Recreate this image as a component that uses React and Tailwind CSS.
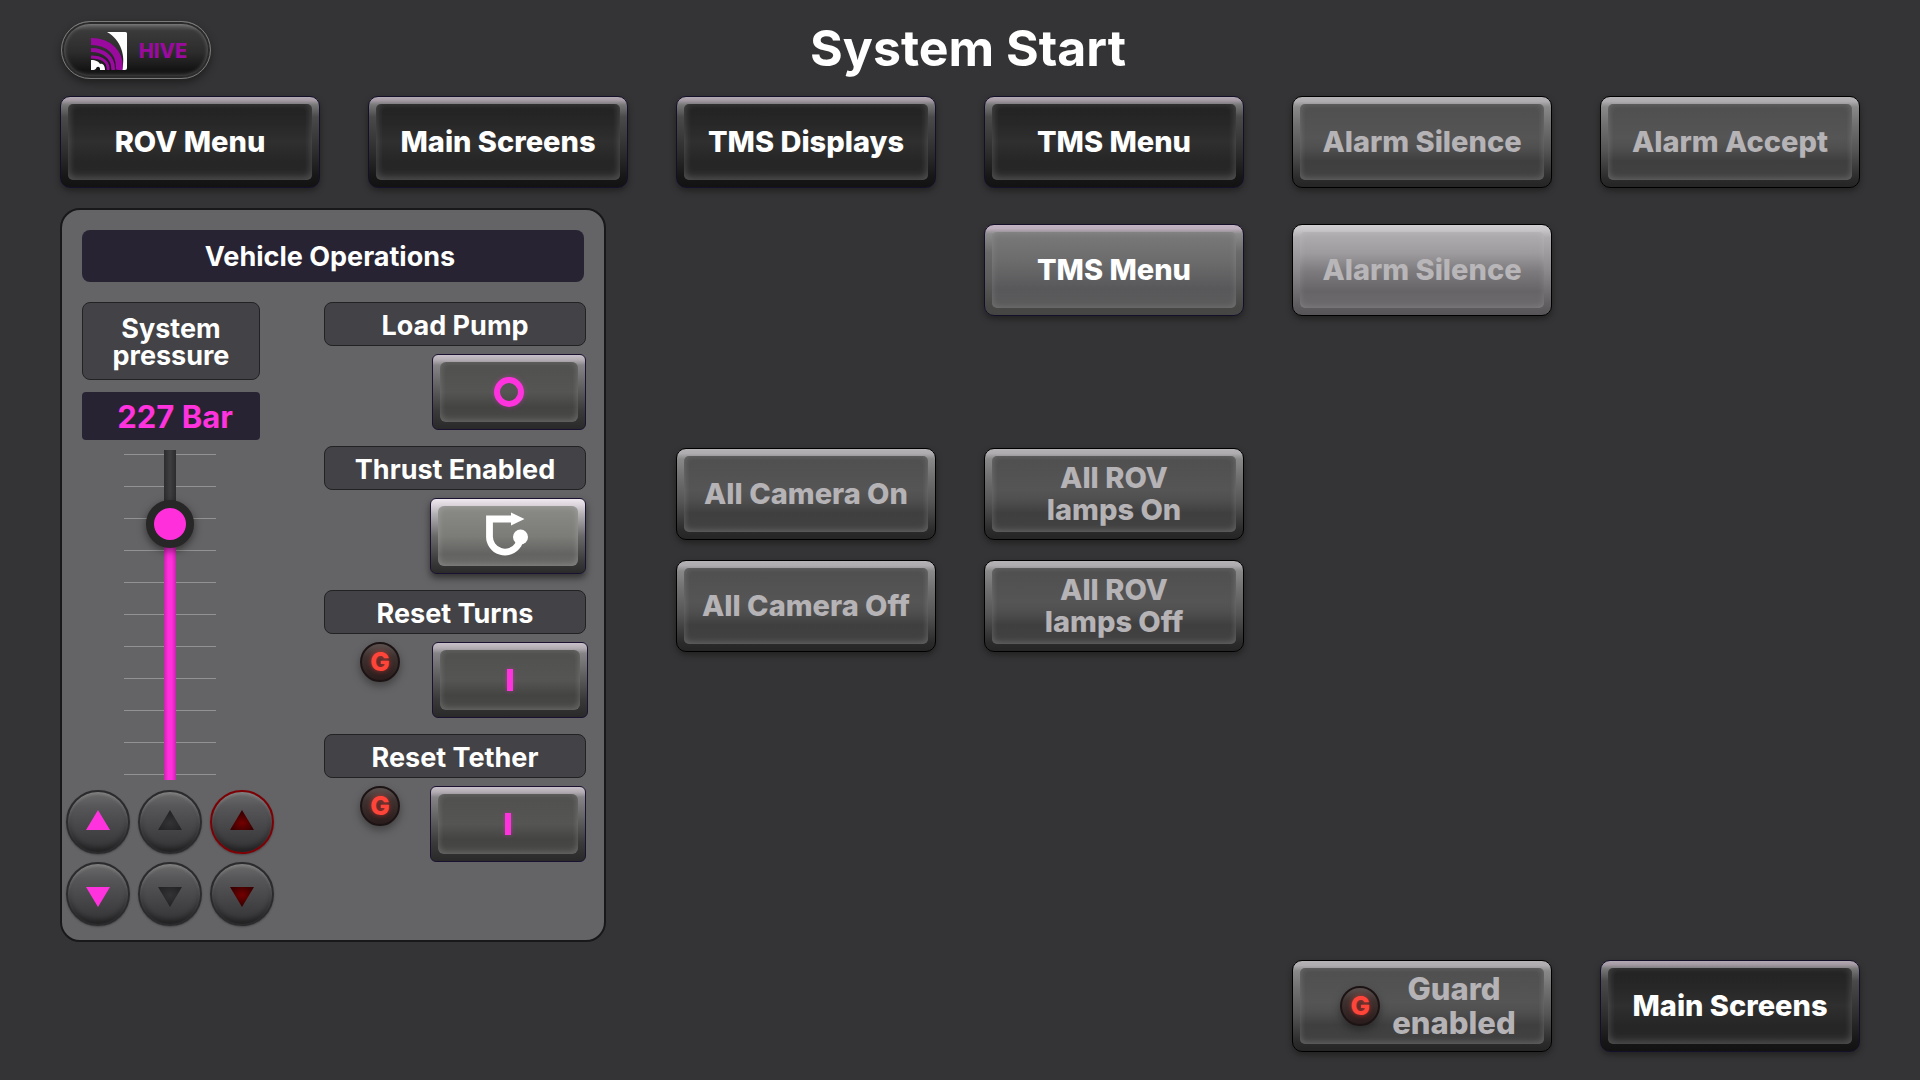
import { useState } from "react";

const FACES = {
  dark: {
    shell:
      "border-[#15102a] bg-[linear-gradient(180deg,#b3a9b3_0%,#a39aa3_4%,#767676_9%,#4a4a4a_22%,#2e2e2e_60%,#171717_88%,#121212_100%)]",
    face: "bg-[linear-gradient(180deg,#222222_0%,#272727_25%,#2f2f2f_50%,#262626_75%,#272727_100%)] shadow-[inset_0_-3px_8px_rgba(255,255,255,0.16),inset_0_0_8px_rgba(255,255,255,0.08)] text-white",
  },
  lit: {
    shell:
      "border-[#15102a] bg-[linear-gradient(180deg,#c4b4c4_0%,#bcaebc_4%,#8a8a8a_10%,#6a6a6a_30%,#5c5c5c_60%,#474745_90%,#454543_100%)]",
    face: "bg-[linear-gradient(180deg,#7a7a7b_0%,#6b6b6c_40%,#58585a_75%,#5c5c5d_100%)] shadow-[inset_0_0_7px_rgba(255,255,255,0.16)] text-white",
  },
  muted: {
    shell:
      "border-black bg-[linear-gradient(180deg,#b5b3b5_0%,#aeacae_5%,#8a898a_11%,#727172_30%,#555455_60%,#2c2b2c_90%,#262526_100%)]",
    face: "bg-[linear-gradient(180deg,#504f50_0%,#565556_45%,#504f50_58%,#403f40_75%,#434243_100%)] shadow-[inset_0_-2px_7px_rgba(255,255,255,0.12),inset_0_0_7px_rgba(255,255,255,0.1)] text-[#b5b3b5]",
  },
  mutedLit: {
    shell:
      "border-black bg-[linear-gradient(180deg,#d0ced0_0%,#c6c4c6_6%,#adabad_14%,#8c8a8c_50%,#5e5c5e_90%,#565456_100%)]",
    face: "bg-[linear-gradient(180deg,#b0aeb0_0%,#9d9b9d_28%,#7c7a7c_52%,#666466_78%,#6d6b6d_100%)] shadow-[inset_0_0_7px_rgba(255,255,255,0.14)] text-[#b8b6b8]",
  },
};

function BevelButton({ tone, className = "", children }) {
  const t = FACES[tone];
  return (
    <button
      type="button"
      className={`flex h-[92px] w-full rounded-[10px] border p-[7px] shadow-[0_3px_6px_rgba(0,0,0,0.35)] ${t.shell} ${className}`}
    >
      <span
        className={`flex flex-1 items-center justify-center self-stretch rounded-[5px] text-center text-[29px] leading-8 font-extrabold ${t.face}`}
      >
        {children}
      </span>
    </button>
  );
}

function GuardBadge() {
  return (
    <span className="flex h-10 w-10 shrink-0 items-center justify-center rounded-full border-2 border-[#1c1414] bg-[linear-gradient(180deg,#5c504e_0%,#3e3230_35%,#2a1c1c_100%)] text-[26px] leading-none font-extrabold text-[#ff453a] shadow-[0_4px_8px_rgba(0,0,0,0.35)] [text-shadow:0_0_5px_rgba(255,50,40,0.6)]">
      G
    </span>
  );
}

function Label({ children, className = "" }) {
  return (
    <div
      className={`flex items-center justify-center rounded-lg border border-[#222124] bg-[#434246] pt-0.5 text-center text-[27px] leading-[27px] font-bold text-white ${className}`}
    >
      {children}
    </div>
  );
}

function SwitchButton({ label, lit, wide, children }) {
  return (
    <button
      type="button"
      aria-label={label}
      className={`flex h-[76px] rounded-md border border-[#1b1232] p-[7px] ${wide ? "w-[156px]" : "w-[154px]"} ${
        lit
          ? "bg-[linear-gradient(180deg,#efe8ef_0%,#dcd6dc_8%,#b4b1b4_20%,#6a696a_50%,#3a393a_85%,#2a2a2a_100%)] shadow-[0_4px_7px_rgba(0,0,0,0.5)]"
          : "bg-[linear-gradient(180deg,#c9c0c9_0%,#b2acb2_7%,#858385_14%,#656465_40%,#3a3a3a_75%,#292929_100%)]"
      }`}
    >
      <span
        className={`flex flex-1 items-center justify-center self-stretch rounded-md ${
          lit
            ? "bg-[linear-gradient(180deg,#8b8b88_0%,#7c7c79_50%,#636361_80%,#6c6c6a_100%)] shadow-[inset_0_0_7px_rgba(255,255,255,0.22)]"
            : "bg-[linear-gradient(180deg,#50504e_0%,#555553_50%,#444443_75%,#494947_100%)] shadow-[inset_0_-2px_7px_rgba(255,255,255,0.12),inset_0_0_7px_rgba(255,255,255,0.1)]"
        }`}
      >
        {children}
      </span>
    </button>
  );
}

function Ring() {
  return (
    <span className="h-[30px] w-[30px] rounded-full border-[6px] border-[#ff33dd] shadow-[0_0_5px_rgba(255,51,221,0.35)]" />
  );
}

function Bar() {
  return <span className="h-[22px] w-[6px] bg-[#ff33dd] shadow-[0_0_5px_rgba(255,51,221,0.35)]" />;
}

function ThrustIcon() {
  return (
    <svg viewBox="1 0 44 44" className="h-11 w-11 overflow-visible" aria-hidden="true">
      <path d="M28 5H4.500V22A15.500 15.500 0 0 0 33 31L36 25" fill="none" stroke="#fff" strokeWidth="6.800" />
      <path d="M26 -1.500L39.500 5L26 11.500Z" fill="#fff" />
      <circle cx="35.500" cy="23" r="7.500" fill="#fff" />
    </svg>
  );
}

function Control({ label, guarded, lit, wide, flush, children }) {
  return (
    <div className="flex flex-col gap-2">
      <Label className="h-11">{label}</Label>
      <div className={`flex items-start justify-between pl-9 ${flush ? "-mr-0.5" : ""}`}>
        <span>{guarded && <GuardBadge />}</span>
        <SwitchButton label={label} lit={lit} wide={wide}>
          {children}
        </SwitchButton>
      </div>
    </div>
  );
}

const MAX_BAR = 293;

function PressureSlider({ value, onChange }) {
  const percent = (value / MAX_BAR) * 100;
  return (
    <div className="relative ml-[42px] h-[330px] w-[92px]">
      <div className="flex h-full flex-col justify-between pt-1 pb-[5px]">
        {Array.from({ length: 11 }, (_, i) => (
          <span key={i} className="h-px w-full bg-[#929292]" />
        ))}
      </div>
      <div className="absolute inset-y-0 left-10 w-3 bg-[linear-gradient(90deg,#2c2c2e,#3e3e40_50%,#2c2c2e)]" />
      <div
        className="absolute bottom-0 left-10 w-3 bg-[linear-gradient(90deg,#c925ae,#ff2fdb_35%,#ff2fdb_65%,#c925ae)]"
        style={{ height: `${percent}%` }}
      />
      <div
        className="absolute left-[22px] h-12 w-12 translate-y-1/2 rounded-full border-8 border-[#272728] bg-[#ff2fdb] shadow-[0_3px_8px_rgba(0,0,0,0.5)]"
        style={{ bottom: `${percent}%` }}
      />
      <input
        type="range"
        aria-label="System pressure"
        min="0"
        max={MAX_BAR}
        value={value}
        onChange={(e) => onChange(Number(e.target.value))}
        className="absolute inset-0 h-full w-full cursor-pointer opacity-0 [direction:rtl] [writing-mode:vertical-lr]"
      />
    </div>
  );
}

function StepButton({ label, down, color, inner, ring, onClick }) {
  const id = `step-${label.toLowerCase().replace(/\s+/g, "-")}`;
  return (
    <button
      type="button"
      aria-label={label}
      onClick={onClick}
      className={`flex h-16 w-16 items-center justify-center rounded-full border-2 bg-[linear-gradient(180deg,#6c6b6c_0%,#565557_25%,#464547_60%,#3a393b_85%,#2e2d2f_100%)] shadow-[inset_0_2px_3px_rgba(255,255,255,0.18),inset_0_-4px_5px_rgba(0,0,0,0.3),0_1px_2px_rgba(0,0,0,0.3)] ${ring}`}
    >
      <svg viewBox="0 0 24 20" className={`mb-1 h-5 w-6 ${down ? "mt-2.5" : ""}`} aria-hidden="true">
        <radialGradient id={id} cx="0.5" cy={down ? "0.4" : "0.65"} r="0.5">
          <stop offset="0" stopColor={inner} />
          <stop offset="1" stopColor={color} />
        </radialGradient>
        <path d={down ? "M12 20L24 0H0Z" : "M12 0L24 20H0Z"} fill={`url(#${id})`} />
      </svg>
    </button>
  );
}

function HiveLogo() {
  return (
    <svg viewBox="0 0 36 38" className="h-[38px] w-9" aria-hidden="true">
      <path d="M16 0H34.500A1.500 1.500 0 0 1 36 1.500V36A2 2 0 0 1 34 38H31C35 24 30 8 16 0Z" fill="#fff" />
      <g fill="none" stroke="#9b0a9e">
        <path d="M0 9.500C18 9.500 30 21 28 38" strokeWidth="7" />
        <path d="M0 18C13 18 23 26 22 38" strokeWidth="3.800" />
        <path d="M0 25C10 25 18 29 17 38" strokeWidth="3" />
      </g>
      <path d="M0 28C5 28 8 30 9 32C12 31 14 34 14 38H9C9.500 35 7 34 5.500 35.500C5 37 4 38 2.500 38H0Z" fill="#fff" />
    </svg>
  );
}

export default function App() {
  const [pressure, setPressure] = useState(227);
  const step = (d) => setPressure((p) => Math.min(MAX_BAR, Math.max(0, p + d)));

  return (
    <div className="flex min-h-screen flex-col bg-[#343335] px-[60px] pb-7 font-[Inter,'Liberation_Sans',sans-serif]">
      <header className="grid h-24 grid-cols-[1fr_auto_1fr] items-center">
        <button
          type="button"
          className="mt-1 ml-px flex h-[58px] w-[150px] items-center justify-center gap-3 rounded-full border border-[#7b7b7b] bg-[linear-gradient(180deg,#6e6e6e_0%,#3a3a3a_16%,#2c2c2c_55%,#141414_85%,#1c1c1c_100%)] pt-0.5 pl-1.5 text-xl font-extrabold text-[#9b0a9e] shadow-[inset_0_0_0_2px_#2b2b2b,inset_0_0_4px_2px_rgba(255,255,255,0.3),0_4px_8px_rgba(0,0,0,0.4)]"
        >
          <HiveLogo />
          HIVE
        </button>
        <h1 className="pl-4 text-[50px] leading-none font-bold text-white">System Start</h1>
      </header>

      <nav className="grid grid-cols-6 gap-x-12">
        <BevelButton tone="dark">ROV Menu</BevelButton>
        <BevelButton tone="dark">Main Screens</BevelButton>
        <BevelButton tone="dark">TMS Displays</BevelButton>
        <BevelButton tone="dark">TMS Menu</BevelButton>
        <BevelButton tone="muted">Alarm Silence</BevelButton>
        <BevelButton tone="muted">Alarm Accept</BevelButton>
      </nav>

      <main className="mt-5 grid grid-cols-6 gap-x-12">
        <section className="col-span-2 mr-[22px] rounded-[20px] border-2 border-[#18181a] bg-[#646365] px-5 pt-5 pb-3.5">
          <h2 className="flex h-[52px] items-center justify-center rounded-lg bg-[#272333] pr-1.5 text-[27px] leading-none font-bold text-white">
            Vehicle Operations
          </h2>
          <div className="mt-5 -mr-0.5 flex items-start justify-between">
            <div className="flex flex-col">
              <Label className="h-[78px] w-[178px]">
                System
                <br />
                pressure
              </Label>
              <output className="mt-3 flex h-12 w-[178px] items-center justify-center rounded-sm bg-[#272333] pl-2 text-[31px] leading-none font-bold text-[#ff33dd]">
                {pressure} Bar
              </output>
              <div className="mt-2.5 w-[178px]">
                <PressureSlider value={pressure} onChange={setPressure} />
              </div>
              <div className="mt-2.5 -ml-4 grid w-max grid-cols-3 gap-2">
                <StepButton label="Increase pressure" color="#ff33dd" inner="#ff33dd" ring="border-[#2b2a2c]" onClick={() => step(1)} />
                <StepButton label="Increase" color="#242325" inner="#333234" ring="border-[#2b2a2c]" />
                <StepButton label="Increase limit" color="#3c0000" inner="#740000" ring="border-[#7d0005]" />
                <StepButton down label="Decrease pressure" color="#ff33dd" inner="#ff33dd" ring="border-[#2b2a2c]" onClick={() => step(-1)} />
                <StepButton down label="Decrease" color="#242325" inner="#333234" ring="border-[#2b2a2c]" />
                <StepButton down label="Decrease limit" color="#3c0000" inner="#740000" ring="border-[#2b2a2c]" />
              </div>
            </div>
            <div className="flex w-[262px] flex-col gap-4">
              <Control label="Load Pump">
                <Ring />
              </Control>
              <Control label="Thrust Enabled" lit wide>
                <ThrustIcon />
              </Control>
              <Control label="Reset Turns" guarded wide flush>
                <Bar />
              </Control>
              <Control label="Reset Tether" guarded wide>
                <Bar />
              </Control>
            </div>
          </div>
        </section>

        <section className="col-span-4 grid grid-cols-4 content-start gap-x-12 gap-y-5 pt-4">
          <BevelButton tone="lit" className="col-start-2">
            TMS Menu
          </BevelButton>
          <BevelButton tone="mutedLit">Alarm Silence</BevelButton>
          <BevelButton tone="muted" className="col-start-1 mt-28">
            All Camera On
          </BevelButton>
          <BevelButton tone="muted" className="mt-28">
            All ROV
            <br />
            lamps On
          </BevelButton>
          <BevelButton tone="muted" className="col-start-1">
            All Camera Off
          </BevelButton>
          <BevelButton tone="muted">
            All ROV
            <br />
            lamps Off
          </BevelButton>
        </section>
      </main>

      <footer className="mt-auto grid grid-cols-6 gap-x-12">
        <BevelButton tone="muted" className="col-start-5">
          <span className="flex items-center gap-3 pl-3">
            <GuardBadge />
            <span className="text-[31px] leading-[34px]">
              Guard
              <br />
              enabled
            </span>
          </span>
        </BevelButton>
        <BevelButton tone="dark">Main Screens</BevelButton>
      </footer>
    </div>
  );
}
